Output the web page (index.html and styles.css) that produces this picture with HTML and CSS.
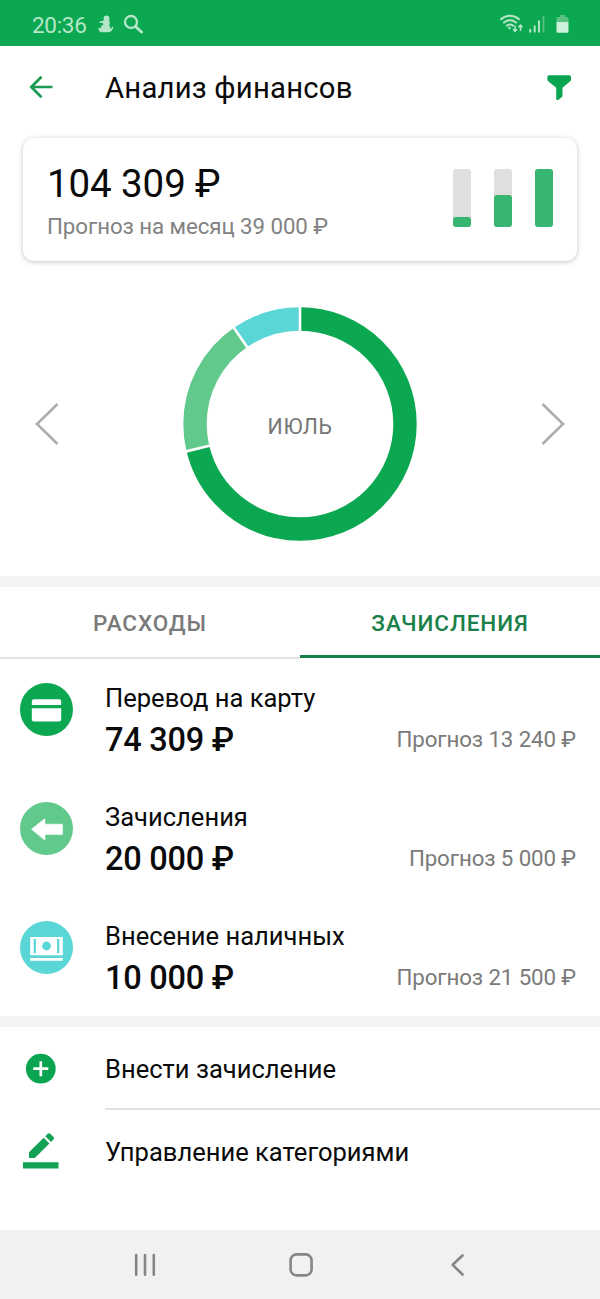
FILE: index.html
```html
<!DOCTYPE html>
<html lang="ru">
<head>
<meta charset="utf-8">
<title>Анализ финансов</title>
<link rel="stylesheet" href="styles.css">
</head>
<body>
<div class="screen">
  <div class="status">
    <span class="clock">20:36</span>
    <svg class="status-left" width="50" height="46" viewBox="96 0 50 46">
      <g fill="#b5e6c8">
        <circle cx="106.500" cy="18.500" r="2.900"/>
        <path d="M103.500 20.500l5.500-.5c1 2 1 4 .2 5.800 1 1 1.300 2.200 1.100 3.200 1-.3 1.600-1.300 2.200-2.500l.8.700c-.4 2.500-2 4.800-4.800 5h-7.500c-2.200-.6-2.800-2.700-2.300-4.700l1.800.9c.3-2 1.500-3.200 3-3.900l-1-1.700-2.800.2-.5-1.300z"/>
      </g>
      <circle cx="131" cy="22" r="6" fill="none" stroke="#b5e6c8" stroke-width="2.300"/>
      <path d="M135.500 26.500l6 5.500" stroke="#b5e6c8" stroke-width="3" fill="none" stroke-linecap="round"/>
    </svg>
    <svg class="status-right" width="80" height="46" viewBox="496 0 80 46">
      <g fill="none" stroke="#b5e6c8" stroke-width="2" stroke-linecap="round">
        <path d="M501 19.200c5.300-4.500 12.700-4.500 18 0M504 22.600c3.600-3 8.400-3 12 0M507 25.600c1.800-1.300 4.200-1.300 6 0"/>
      </g>
      <circle cx="509.500" cy="28" r="1.300" fill="#b5e6c8"/>
      <path d="M515 25.500v5.500M513 29.300l2 2.200 2-2.200M520.500 31v-5.500M518.500 27.200l2-2.200 2 2.200" fill="none" stroke="#b5e6c8" stroke-width="1.500"/>
      <path d="M530.200 29v3.500M534.700 25.500v7M539 20.500v12" stroke="#b5e6c8" stroke-width="1.900"/>
      <path d="M543.500 16v16.500" stroke="#58c280" stroke-width="1.800"/>
      <path d="M556.500 22v-3.500q0-1.500 1.500-1.500h2v-2h5v2h2q1.500 0 1.500 1.500v3.500z" fill="#58c280"/>
      <path d="M556.500 22h12v9.500q0 1.300-1.300 1.300h-9.400q-1.300 0-1.300-1.300z" fill="#cdf0da"/>
    </svg>
  </div>

  <header class="header">
    <svg class="back" width="24" height="24" viewBox="29 75 24 24"><path d="M52.500 87H31.500M41.500 76.800L31.300 87l10.200 10.200" fill="none" stroke="#1b9a52" stroke-width="2.700"/></svg>
    <h1 class="title">Анализ финансов</h1>
    <svg class="filter" width="26" height="26" viewBox="546 75 26 26"><path d="M549 75.200h20.300q1.700 0 1.700 1.800v2.500q0 1-.8 1.700l-7.700 6.600v7.800q0 .8-.6 1.300l-3 2.600q-1.300.9-2.200.4-.5-.3-.5-1.200V87.800l-8-6.600q-.8-.7-.8-1.700V77q0-1.800 1.600-1.800z" fill="#0ba551"/></svg>
  </header>

  <section class="card">
    <div class="card-text">
      <div class="total">104 309 ₽</div>
      <div class="month-forecast">Прогноз на месяц 39 000 ₽</div>
    </div>
    <div class="bars">
      <div class="bar"><div class="fill" style="height:18%"></div></div>
      <div class="bar"><div class="fill" style="height:56%"></div></div>
      <div class="bar"><div class="fill" style="height:100%"></div></div>
    </div>
  </section>

  <section class="chart">
    <svg class="chevron" width="26" height="44" viewBox="0 0 26 44"><path d="M23.500 2L3 22l20.500 20" fill="none" stroke="#adadad" stroke-width="2.600"/></svg>
    <div class="donut">
      <svg width="234" height="234" viewBox="-117 -117 234 234">
        <g fill="none" stroke-width="23.400" transform="rotate(-90)">
          <circle r="105" pathLength="360" stroke="#0ba751" stroke-dasharray="256.460 103.540"/>
          <circle r="105" pathLength="360" stroke="#62c98d" stroke-dasharray="69.030 290.970" stroke-dashoffset="-256.460"/>
          <circle r="105" pathLength="360" stroke="#5bd6d6" stroke-dasharray="34.510 325.490" stroke-dashoffset="-325.490"/>
        </g>
        <g stroke="#fff" stroke-width="2.600">
          <path d="M0-90V-118"/>
          <path d="M0-90V-118" transform="rotate(256.460)"/>
          <path d="M0-90V-118" transform="rotate(325.490)"/>
        </g>
      </svg>
      <span class="month">ИЮЛЬ</span>
    </div>
    <svg class="chevron" width="26" height="44" viewBox="0 0 26 44"><path d="M2.500 2L23 22 2.500 42" fill="none" stroke="#adadad" stroke-width="2.600"/></svg>
  </section>

  <div class="divider"></div>

  <nav class="tabs">
    <div class="tab"><span>РАСХОДЫ</span></div>
    <div class="tab active"><span>ЗАЧИСЛЕНИЯ</span></div>
  </nav>

  <ul class="list">
    <li class="item">
      <svg width="53" height="53" viewBox="0 0 53 53"><circle cx="26.500" cy="26.500" r="26.500" fill="#0ba751"/><path d="M14 16.200h25q2.200 0 2.200 2.200v3.600H11.800v-3.600q0-2.200 2.200-2.200zM11.800 25.300h29.400v10.900q0 2.200-2.200 2.200H14q-2.200 0-2.200-2.200z" fill="#fff"/></svg>
      <div class="info"><div class="name">Перевод на карту</div><div class="amount">74 309 ₽</div></div>
      <div class="forecast">Прогноз 13 240 ₽</div>
    </li>
    <li class="item">
      <svg width="53" height="53" viewBox="0 0 53 53"><circle cx="26.500" cy="26.500" r="26.500" fill="#62c98d"/><path d="M11.500 27.300L24 17.200h1v5h17.500v10.200H25v5h-1z" fill="#fff" stroke="#fff" stroke-width=".6" stroke-linejoin="round"/></svg>
      <div class="info"><div class="name">Зачисления</div><div class="amount">20 000 ₽</div></div>
      <div class="forecast">Прогноз 5 000 ₽</div>
    </li>
    <li class="item">
      <svg width="53" height="53" viewBox="0 0 53 53"><circle cx="26.500" cy="26.500" r="26.500" fill="#5bd6d6"/><path d="M10.200 16h32.600v18.200H10.200zM10.200 37h32.600v2.800H10.200z" fill="#fff"/><circle cx="26.500" cy="25" r="4.400" fill="#5bd6d6"/><path d="M14.800 18v14.300M38.200 18v14.300" stroke="#5bd6d6" stroke-width="2.200"/></svg>
      <div class="info"><div class="name">Внесение наличных</div><div class="amount">10 000 ₽</div></div>
      <div class="forecast">Прогноз 21 500 ₽</div>
    </li>
  </ul>

  <div class="divider"></div>

  <div class="actions">
    <div class="action">
      <svg width="60" height="60" viewBox="11 1039 60 60"><circle cx="40.800" cy="1068.700" r="14.900" fill="#0ba551"/><path d="M33.300 1068.700h15M40.800 1061.200v15" stroke="#fff" stroke-width="2.700"/></svg>
      <div class="action-label">Внести зачисление</div>
    </div>
    <div class="action">
      <svg width="60" height="60" viewBox="11 1122 60 60"><path d="M23 1162.200h35.500v6.200H23zM29 1158v-5.700l14.700-14.500 5.700 5.600L34.800 1158zM45.300 1136.300l2.700-2.700q1-.9 2 0l3.700 3.700q.9 1 0 2l-2.700 2.700z" fill="#13a153"/></svg>
      <div class="action-label last">Управление категориями</div>
    </div>
  </div>

  <footer class="sysnav">
    <svg width="600" height="69" viewBox="0 1230 600 69">
      <g fill="none" stroke="#858585" stroke-width="2.600" stroke-linecap="round" stroke-linejoin="round">
        <path d="M136.200 1255v19.800M145 1255v19.800M153.800 1255v19.800M462.500 1255.500l-9.800 9.300 9.800 9.700"/>
        <rect x="290.600" y="1254.400" width="21" height="21" rx="6"/>
      </g>
    </svg>
  </footer>
</div>
</body>
</html>
```
FILE: styles.css
```css
* { box-sizing: border-box; }
body { margin: 0; background: #fff; font-family: Roboto, "Noto Sans", sans-serif; color: #0a0a0a; }
svg { display: block; flex: none; }

.screen { width: 600px; height: 1299px; display: flex; flex-direction: column; overflow: hidden; }

.status { height: 46px; flex: none; background: #0ba751; display: flex; align-items: center; padding: 0 24px 0 32px; }
.clock { width: 64px; font-size: 22.500px; line-height: 46px; padding-top: 3px; letter-spacing: -.3px; color: #b5e6c8; white-space: nowrap; }
.status-right { margin-left: auto; }

.header { height: 92px; flex: none; display: flex; align-items: flex-start; padding: 29px 28px 0 29px; }
.title { margin: -4px 0 0 52px; font-size: 29.300px; line-height: 35px; font-weight: 400; letter-spacing: .2px; }
.filter { margin-left: auto; }

.card { margin: 0 23px; height: 123px; flex: none; display: flex; justify-content: space-between; padding: 24px 24px 0; border-radius: 11px; background: #fff; box-shadow: 0 1px 5px rgba(0, 0, 0, .24); }
.total { font-size: 38.500px; line-height: 44px; letter-spacing: -.1px; white-space: nowrap; }
.month-forecast { margin-top: 7px; font-size: 22.300px; line-height: 26px; letter-spacing: -.08px; color: #828282; white-space: nowrap; }
.bars { display: flex; gap: 23px; padding-top: 7px; }
.bar { width: 18px; height: 58px; background: #dfdfdf; border-radius: 3px; display: flex; align-items: flex-end; }
.fill { width: 100%; background: #36b670; border-radius: 3px; }

.chart { height: 315px; flex: none; display: flex; justify-content: space-between; align-items: flex-start; padding: 46px 34px 0; }
.chevron { margin-top: 95px; }
.donut { display: grid; place-items: center; }
.donut > * { grid-area: 1 / 1; }
.month { font-size: 21.300px; line-height: 26px; padding-top: 5px; letter-spacing: .6px; color: #757575; }

.divider { height: 11px; flex: none; background: #f4f4f4; }

.tabs { height: 72px; flex: none; display: flex; }
.tab { flex: 1; height: 72px; display: flex; justify-content: center; border-bottom: 2px solid #e2e2e2; font-size: 22.500px; line-height: 73px; font-weight: 500; letter-spacing: .9px; color: #7a7a7a; }
.tab.active { height: 71px; color: #1a8049; border-bottom: 3px solid #1a8049; }

.list { margin: 0; padding: 0; list-style: none; height: 357px; flex: none; }
.item { height: 119px; padding: 24px 24px 0 20px; display: flex; align-items: flex-start; }
.info { margin-left: 32px; }
.name { font-size: 25.550px; line-height: 30px; white-space: nowrap; }
.amount { margin-top: 8px; font-size: 32.500px; line-height: 39px; letter-spacing: -.25px; font-weight: 500; white-space: nowrap; }
.forecast { margin: 43px 0 0 auto; font-size: 22.300px; line-height: 26px; letter-spacing: -.12px; color: #7a7a7a; white-space: nowrap; }

.actions { flex: 1; }
.action { height: 83px; padding-left: 11px; display: flex; align-items: flex-start; }
.action svg { margin-top: 12px; }
.action-label { margin-left: 34px; flex: 1; height: 83px; border-bottom: 2px solid #e2e2e2; font-size: 25.550px; line-height: 84px; white-space: nowrap; }
.action-label.last { border: 0; }

.sysnav { height: 69px; flex: none; background: #f1f1f1; }
```
